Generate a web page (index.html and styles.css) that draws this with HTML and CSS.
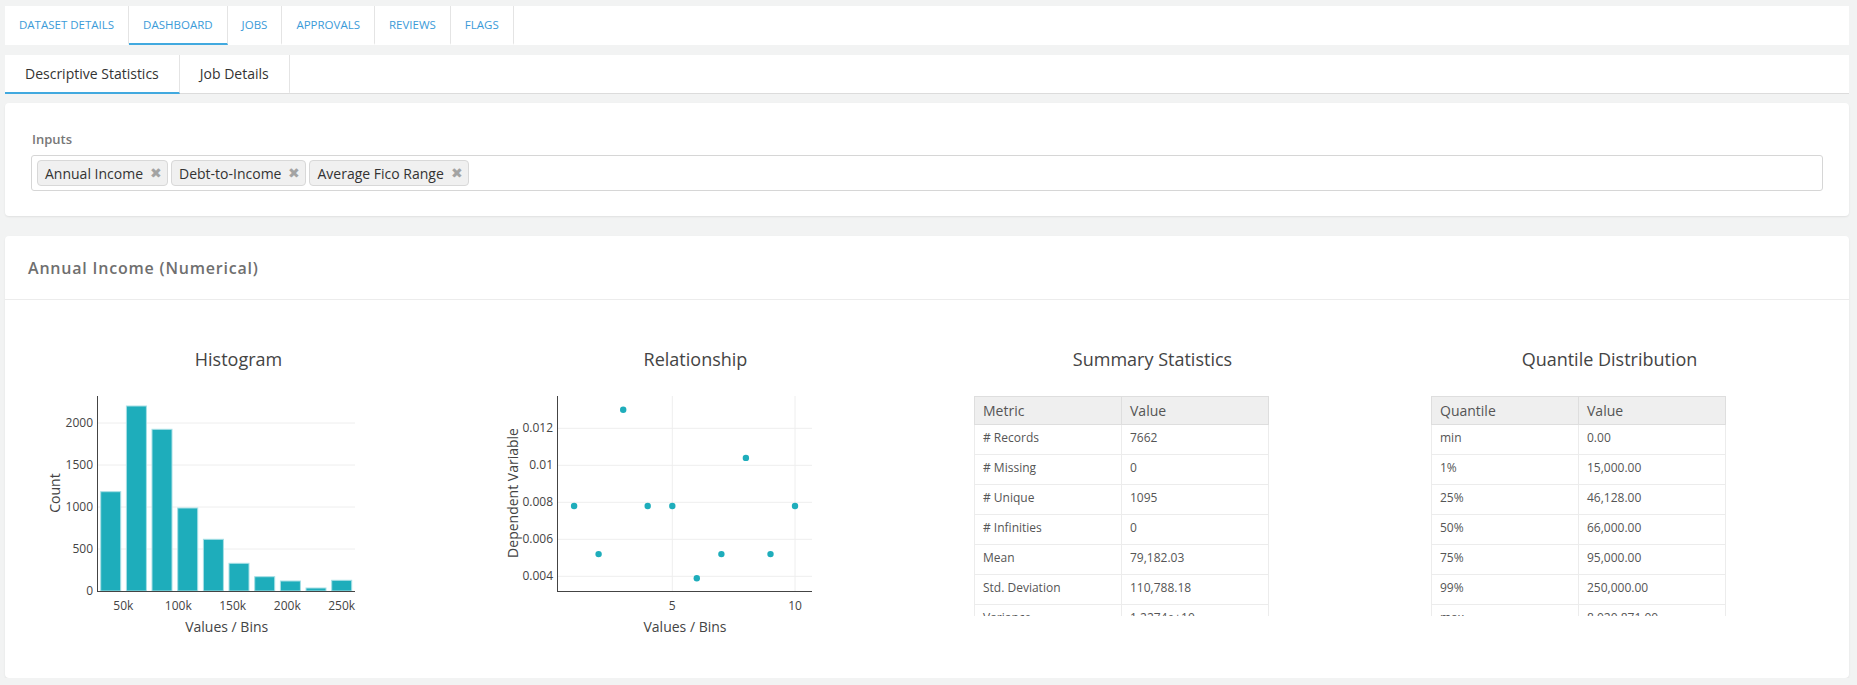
FILE: index.html
```html
<!DOCTYPE html>
<html>
<head>
<meta charset="utf-8">
<link rel="stylesheet" href="styles.css">
</head>
<body>
<div class="page">
  <nav class="topnav">
    <a class="toptab">Dataset Details</a>
    <a class="toptab active">Dashboard</a>
    <a class="toptab">Jobs</a>
    <a class="toptab">Approvals</a>
    <a class="toptab">Reviews</a>
    <a class="toptab">Flags</a>
  </nav>

  <nav class="subtabs">
    <a class="subtab active">Descriptive Statistics</a>
    <a class="subtab">Job Details</a>
  </nav>

  <section class="card inputs-card">
    <div class="field-label">Inputs</div>
    <div class="tag-input">
      <span class="tag">Annual Income <span class="tag-x">✖</span></span>
      <span class="tag">Debt-to-Income <span class="tag-x">✖</span></span>
      <span class="tag">Average Fico Range <span class="tag-x">✖</span></span>
    </div>
  </section>

  <section class="card main-card">
    <header class="card-header">Annual Income (Numerical)</header>
    <div class="card-body">
      <div class="col">
        <svg class="chart" width="457" height="330" viewBox="0 0 457 330">
          <text class="c-title" x="228.5" y="46" text-anchor="middle">Histogram</text>
          <g class="grid">
            <line x1="88" y1="229" x2="345" y2="229"/>
            <line x1="88" y1="187" x2="345" y2="187"/>
            <line x1="88" y1="145" x2="345" y2="145"/>
            <line x1="88" y1="103" x2="345" y2="103"/>
          </g>
          <g class="bars">
            <rect x="90.7" y="171.7" width="20" height="99.3"/>
            <rect x="116.4" y="86" width="20" height="185"/>
            <rect x="142" y="109.3" width="20" height="161.7"/>
            <rect x="167.7" y="188" width="20" height="83"/>
            <rect x="193.4" y="219.3" width="20" height="51.7"/>
            <rect x="219" y="243.3" width="20" height="27.7"/>
            <rect x="244.7" y="256.7" width="20" height="14.3"/>
            <rect x="270.4" y="261" width="20" height="10"/>
            <rect x="296" y="268" width="20" height="3"/>
            <rect x="321.7" y="260.3" width="20" height="10.7"/>
          </g>
          <g class="axis">
            <line x1="87.5" y1="76" x2="87.5" y2="271.5"/>
            <line x1="87" y1="271.5" x2="345" y2="271.5"/>
          </g>
          <g class="tick" text-anchor="end">
            <text x="83" y="275">0</text>
            <text x="83" y="233">500</text>
            <text x="83" y="191">1000</text>
            <text x="83" y="149">1500</text>
            <text x="83" y="107">2000</text>
          </g>
          <g class="tick" text-anchor="middle">
            <text x="113.3" y="290">50k</text>
            <text x="168.3" y="290">100k</text>
            <text x="222.7" y="290">150k</text>
            <text x="277.3" y="290">200k</text>
            <text x="331.7" y="290">250k</text>
          </g>
          <text class="a-title" x="216.7" y="312" text-anchor="middle">Values / Bins</text>
          <text class="a-title" x="0" y="0" text-anchor="middle" transform="translate(50 173) rotate(-90)">Count</text>
        </svg>
      </div>

      <div class="col">
        <svg class="chart" width="457" height="330" viewBox="0 0 457 330">
          <text class="c-title" x="228.5" y="46" text-anchor="middle">Relationship</text>
          <g class="grid">
            <line x1="91" y1="108.3" x2="345" y2="108.3"/>
            <line x1="91" y1="145.3" x2="345" y2="145.3"/>
            <line x1="91" y1="182.3" x2="345" y2="182.3"/>
            <line x1="91" y1="219.3" x2="345" y2="219.3"/>
            <line x1="91" y1="256.3" x2="345" y2="256.3"/>
            <line x1="205.3" y1="76" x2="205.3" y2="271"/>
            <line x1="328" y1="76" x2="328" y2="271"/>
          </g>
          <g class="axis">
            <line x1="90.5" y1="76" x2="90.5" y2="271.5"/>
            <line x1="90" y1="271.5" x2="345" y2="271.5"/>
          </g>
          <g class="dots">
            <circle cx="107.1" cy="186" r="3.2"/>
            <circle cx="131.6" cy="234.1" r="3.2"/>
            <circle cx="156.2" cy="89.8" r="3.2"/>
            <circle cx="180.7" cy="186" r="3.2"/>
            <circle cx="205.3" cy="186" r="3.2"/>
            <circle cx="229.8" cy="258.2" r="3.2"/>
            <circle cx="254.4" cy="234.1" r="3.2"/>
            <circle cx="278.9" cy="137.9" r="3.2"/>
            <circle cx="303.5" cy="234.1" r="3.2"/>
            <circle cx="328" cy="186" r="3.2"/>
          </g>
          <g class="tick" text-anchor="end">
            <text x="86" y="112.3">0.012</text>
            <text x="86" y="149.3">0.01</text>
            <text x="86" y="186.3">0.008</text>
            <text x="86" y="223.3">0.006</text>
            <text x="86" y="260.3">0.004</text>
          </g>
          <g class="tick" text-anchor="middle">
            <text x="205.3" y="290">5</text>
            <text x="328" y="290">10</text>
          </g>
          <text class="a-title" x="218" y="312" text-anchor="middle">Values / Bins</text>
          <text class="a-title" x="0" y="0" text-anchor="middle" transform="translate(51 173) rotate(-90)">Dependent Variable</text>
        </svg>
      </div>

      <div class="col">
        <div class="stat-title">Summary Statistics</div>
        <div class="table-wrap">
          <table class="stat-table">
            <thead><tr><th>Metric</th><th>Value</th></tr></thead>
            <tbody>
              <tr><td># Records</td><td>7662</td></tr>
              <tr><td># Missing</td><td>0</td></tr>
              <tr><td># Unique</td><td>1095</td></tr>
              <tr><td># Infinities</td><td>0</td></tr>
              <tr><td>Mean</td><td>79,182.03</td></tr>
              <tr><td>Std. Deviation</td><td>110,788.18</td></tr>
              <tr><td>Variance</td><td>1.2274e+10</td></tr>
            </tbody>
          </table>
        </div>
      </div>

      <div class="col">
        <div class="stat-title">Quantile Distribution</div>
        <div class="table-wrap">
          <table class="stat-table">
            <thead><tr><th>Quantile</th><th>Value</th></tr></thead>
            <tbody>
              <tr><td>min</td><td>0.00</td></tr>
              <tr><td>1%</td><td>15,000.00</td></tr>
              <tr><td>25%</td><td>46,128.00</td></tr>
              <tr><td>50%</td><td>66,000.00</td></tr>
              <tr><td>75%</td><td>95,000.00</td></tr>
              <tr><td>99%</td><td>250,000.00</td></tr>
              <tr><td>max</td><td>8,020,871.00</td></tr>
            </tbody>
          </table>
        </div>
      </div>
    </div>
  </section>
</div>
</body>
</html>
```
FILE: styles.css
```css
* { box-sizing: border-box; }

body {
  margin: 0;
  background: #f2f3f3;
  font-family: "Open Sans", sans-serif;
  color: #333;
}

.page {
  padding: 6px 8px 0 5px;
}

.topnav {
  display: flex;
  height: 39px;
  background: #fff;
}

.toptab {
  display: flex;
  align-items: center;
  padding: 0 14px;
  font-size: 11.5px;
  text-transform: uppercase;
  color: #3b9bd8;
  border-right: 1px solid #e4e4e4;
  border-bottom: 2px solid transparent;
  cursor: pointer;
}

.toptab.active {
  border-bottom-color: #41a9df;
}

.subtabs {
  display: flex;
  height: 39px;
  margin-top: 10px;
  background: #fff;
  border-bottom: 1px solid #dcdcdc;
}

.subtab {
  display: flex;
  align-items: center;
  padding: 0 20px;
  font-size: 14px;
  color: #333;
  border-right: 1px solid #e4e4e4;
  border-bottom: 2px solid transparent;
  margin-bottom: -1px;
}

.subtab.active {
  border-bottom-color: #41a9df;
}

.card {
  background: #fff;
  border-radius: 4px;
  box-shadow: 0 1px 2px rgba(0, 0, 0, 0.08);
}

.inputs-card {
  margin-top: 9px;
  height: 113px;
  padding: 27px 26px 0 26px;
}

.field-label {
  font-size: 13px;
  color: #777;
  font-weight: 600;
  line-height: 18px;
  margin-bottom: 7px;
  padding-left: 1px;
}

.tag-input {
  display: flex;
  gap: 3px;
  height: 36px;
  padding: 4px 5px;
  border: 1px solid #d6d6d6;
  border-radius: 3px;
}

.tag {
  display: flex;
  align-items: center;
  gap: 7px;
  height: 26px;
  padding: 0 5px 0 7px;
  background: #f0f0f0;
  border: 1px solid #d8d8d8;
  border-radius: 4px;
  font-size: 14px;
  color: #333;
}

.tag-x {
  font-size: 14px;
  line-height: 1;
  color: #a3a3a3;
}

.main-card {
  margin-top: 20px;
  height: 442px;
}

.card-header {
  height: 64px;
  padding-left: 23px;
  display: flex;
  align-items: center;
  font-size: 16px;
  font-weight: 600;
  letter-spacing: 0.8px;
  color: #6f6f6f;
  border-bottom: 1px solid #ececec;
}

.card-body {
  display: grid;
  grid-template-columns: repeat(4, 1fr);
  padding: 20px 11px 0 5px;
}

.chart {
  display: block;
  font-family: "Open Sans", sans-serif;
}

.c-title {
  font-size: 18px;
  fill: #444;
}

.a-title {
  font-size: 14px;
  fill: #444;
}

.tick text, .tick {
  font-size: 12px;
  fill: #444;
}

.grid line {
  stroke: #eeeeee;
  stroke-width: 1;
}

.axis line {
  stroke: #444;
  stroke-width: 1;
}

.bars rect {
  fill: #1eadbb;
  stroke: #a7dfe5;
  stroke-width: 1;
}

.dots circle {
  fill: #1eadbb;
}

.stat-title {
  height: 76px;
  line-height: 78px;
  text-align: center;
  font-size: 18px;
  color: #444;
}

.table-wrap {
  width: 295px;
  margin-left: 50px;
  max-height: 220px;
  overflow: hidden;
}

.stat-table {
  width: 100%;
  border-collapse: collapse;
  table-layout: fixed;
}

.stat-table th {
  height: 28px;
  padding: 0 8px;
  text-align: left;
  font-weight: 400;
  font-size: 14px;
  color: #555;
  background: #efefef;
  border: 1px solid #dedede;
}

.stat-table td {
  height: 30px;
  padding: 5px 8px 0;
  vertical-align: top;
  font-size: 12px;
  line-height: 16px;
  color: #555;
  border: 1px solid #ececec;
}
```
